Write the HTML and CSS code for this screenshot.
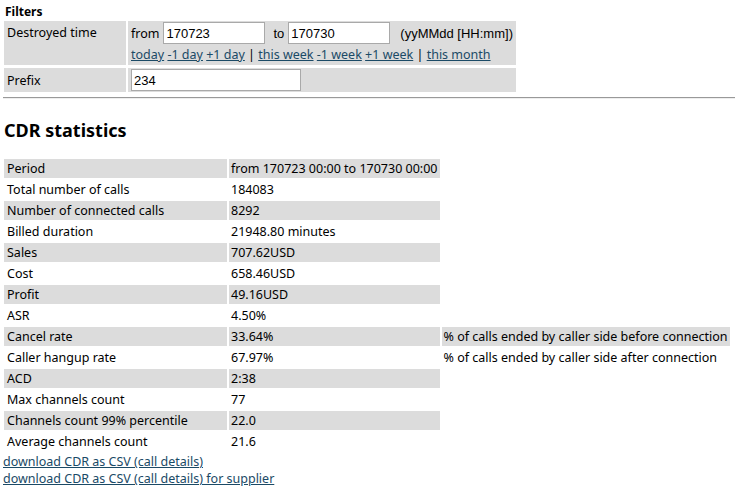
FILE: index.html
```html
<!DOCTYPE html>
<html lang="en">
<head>
  <meta charset="UTF-8" />
  <title>CDR statistics</title>
  <link rel="stylesheet" href="styles.css">
</head>
<body>
  <!-- filters -->
  <div class="filters-title">Filters</div>
  <table class="filter-table">
    <tr>
      <td class="lbl lbl-top">Destroyed time</td>
      <td class="val">
        <div class="range">
          from <input class="date-input" type="text" value="170723">
          <span class="to">to</span> <input class="date-input" type="text" value="170730">
          <span class="hint">(yyMMdd [HH:mm])</span>
        </div>
        <div class="quick">
          <a href="#">today</a> <a href="#">-1 day</a> <a href="#">+1 day</a> |
          <a href="#">this week</a> <a href="#">-1 week</a> <a href="#">+1 week</a> |
          <a href="#">this month</a>
        </div>
      </td>
    </tr>
    <tr>
      <td class="lbl">Prefix</td>
      <td class="val"><input class="prefix-input" type="text" value="234"></td>
    </tr>
  </table>

  <hr>

  <h2>CDR statistics</h2>

  <table class="stats">
    <tr class="odd"><td class="c1">Period</td><td>from 170723 00:00 to 170730 00:00</td></tr>
    <tr><td class="c1">Total number of calls</td><td>184083</td></tr>
    <tr class="odd"><td class="c1">Number of connected calls</td><td>8292</td></tr>
    <tr><td class="c1">Billed duration</td><td>21948.80 minutes</td></tr>
    <tr class="odd"><td class="c1">Sales</td><td>707.62USD</td></tr>
    <tr><td class="c1">Cost</td><td>658.46USD</td></tr>
    <tr class="odd"><td class="c1">Profit</td><td>49.16USD</td></tr>
    <tr><td class="c1">ASR</td><td>4.50%</td></tr>
    <tr class="odd"><td class="c1">Cancel rate</td><td>33.64%</td><td>% of calls ended by caller side before connection</td></tr>
    <tr><td class="c1">Caller hangup rate</td><td>67.97%</td><td>% of calls ended by caller side after connection</td></tr>
    <tr class="odd"><td class="c1">ACD</td><td>2:38</td></tr>
    <tr><td class="c1">Max channels count</td><td>77</td></tr>
    <tr class="odd"><td class="c1">Channels count 99% percentile</td><td>22.0</td></tr>
    <tr><td class="c1">Average channels count</td><td>21.6</td></tr>
  </table>

  <div class="downloads">
    <a href="#">download CDR as CSV (call details)</a><br>
    <a href="#">download CDR as CSV (call details) for supplier</a>
  </div>
</body>
</html>
```

FILE: styles.css
```css
body {
  font-family: "Noto Sans", "Open Sans", sans-serif;
  font-size: 12.5px;
  color: #000;
  background: #fff;
  margin: 2px 0 0 2px;
}
a {
  color: #1b4a66;
}
.filters-title {
  font-weight: bold;
  font-size: 12px;
  margin: 2px 0 0 3px;
  line-height: 15px;
}
.filter-table {
  border-spacing: 2px;
  margin-top: 0;
}
.filter-table td {
  background: #dcdcdc;
  padding: 1px 3px;
  vertical-align: middle;
}
.filter-table tr + tr td {
  border-top: 1px solid #fff;
}
.filter-table .lbl {
  width: 116px;
}
.filter-table .lbl-top {
  vertical-align: top;
  padding-top: 3px;
}
.range {
  display: flex;
  align-items: center;
  gap: 4px;
}
.date-input {
  width: 96px;
  height: 16px;
  font-family: "Liberation Sans", Arial, sans-serif;
  font-size: 13px;
  border: 1px solid #a9a9a9;
  padding: 2px 2px;
  margin: 0;
}
.to,
.hint {
  font-family: "Liberation Sans", Arial, sans-serif;
  font-size: 13px;
}
.to {
  margin-left: 4px;
}
.hint {
  margin-left: 6px;
}
.quick {
  line-height: 17px;
  padding: 2px 0 1px;
}
.prefix-input {
  width: 164px;
  height: 16px;
  font-family: "Liberation Sans", Arial, sans-serif;
  font-size: 13px;
  border: 1px solid #a9a9a9;
  padding: 2px 2px;
  margin: 0;
}
hr {
  border: none;
  border-top: 1px solid #999;
  border-bottom: 1px solid #eee;
  margin: 3px 0 0 1px;
}
h2 {
  font-size: 18px;
  margin: 20px 0 0 2px;
  line-height: 22px;
}
.stats {
  border-spacing: 2px;
  margin-top: 16px;
}
.stats td {
  padding: 0 2px;
  height: 19px;
  line-height: 19px;
  white-space: nowrap;
}
.stats .c1 {
  width: 218px;
  padding-left: 3px;
}
.stats tr.odd td {
  background: #dcdcdc;
}
.downloads {
  margin-left: 1px;
  line-height: 17px;
}
```
